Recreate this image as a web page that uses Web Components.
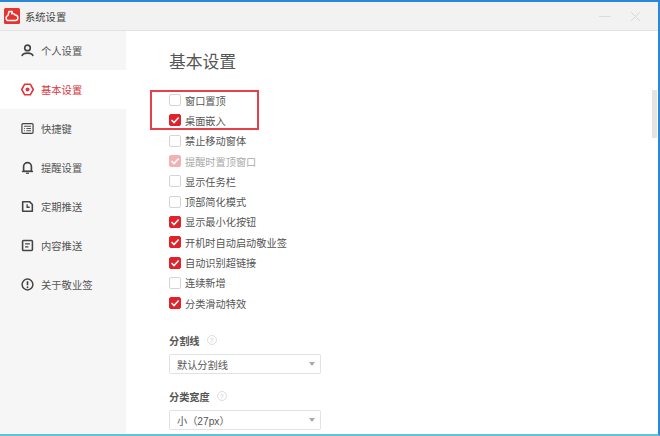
<!DOCTYPE html>
<html>
<head>
<meta charset="utf-8">
<title>系统设置</title>
<style>
    html, body { margin: 0; padding: 0; background: #fff; }
    body { font-family: "Liberation Sans", "Noto Sans CJK SC", sans-serif; }
</style>
</head>
<body>
<settings-window>
    <nav-item slot="nav" icon="user">个人设置</nav-item>
    <nav-item slot="nav" icon="hex" active>基本设置</nav-item>
    <nav-item slot="nav" icon="keys">快捷键</nav-item>
    <nav-item slot="nav" icon="bell">提醒设置</nav-item>
    <nav-item slot="nav" icon="clock">定期推送</nav-item>
    <nav-item slot="nav" icon="doc">内容推送</nav-item>
    <nav-item slot="nav" icon="info">关于敬业签</nav-item>

    <check-row>窗口置顶</check-row>
    <check-row checked>桌面嵌入</check-row>
    <check-row>禁止移动窗体</check-row>
    <check-row checked disabled>提醒时置顶窗口</check-row>
    <check-row>显示任务栏</check-row>
    <check-row>顶部简化模式</check-row>
    <check-row checked>显示最小化按钮</check-row>
    <check-row checked>开机时自动启动敬业签</check-row>
    <check-row checked>自动识别超链接</check-row>
    <check-row>连续新增</check-row>
    <check-row checked>分类滑动特效</check-row>

    <select-field slot="fields" label="分割线" value="默认分割线"></select-field>
    <select-field slot="fields" label="分类宽度" value="小（27px）"></select-field>
</settings-window>

<script>
// icon strokes for the side menu, all on a 14x14 box
const ICONS = {
    user: '<circle cx="7" cy="4.2" r="3" fill="none" stroke-width="1.8"/><path d="M1.2 13c.2-2.4 2.2-3.200 5.800-3.200s5.600.8 5.800 3.200" fill="none" stroke-width="1.700"/>',
    hex: '<path d="M4 1.300h6L13.200 7 10 12.700H4L.8 7z" fill="none" stroke-width="1.700" stroke-linejoin="round"/><circle cx="7" cy="7" r="2.100" fill="currentColor" stroke="none"/>',
    keys: '<rect x="1" y="1.800" width="12" height="10.400" rx="1.200" fill="none" stroke-width="1.300"/><path d="M3.200 4.600h7.600M5.800 7h5M5.800 9.400h5M3.200 7h1M3.200 9.400h1" fill="none" stroke-width="1"/>',
    bell: '<path d="M2.800 11V6a4.200 4.200 0 0 1 8.400 0V11z" fill="none" stroke-width="1.800"/><path d="M1 11.300h12" fill="none" stroke-width="1.500"/><path d="M5.500 13.200h3" fill="none" stroke-width="1.400"/>',
    clock: '<path d="M1.800 1.800h7.400l3 3v7.400H1.800z" fill="none" stroke-width="1.700" stroke-linejoin="round"/><path d="M6.600 4.600V7.800h2.800" fill="none" stroke-width="1.400"/>',
    doc: '<rect x="1.700" y="1.700" width="10.600" height="10.600" rx="1" fill="none" stroke-width="1.700"/><path d="M4.400 5.300h5.200M4.400 8.500h3.600" fill="none" stroke-width="1.400"/>',
    info: '<circle cx="7" cy="7" r="5.800" fill="none" stroke-width="1.600"/><path d="M7 3.500v4.300" fill="none" stroke-width="1.800"/><circle cx="7" cy="10" r="1" fill="currentColor" stroke="none"/>',
};

// (PARENT) window frame, title bar and the two columns
class SettingsWindow extends HTMLElement {
    constructor() {
        super();
        this.attachShadow({ mode: 'open' });
        this.shadowRoot.innerHTML = `
        <style>
            :host {
                display: flex;
                flex-direction: column;
                position: relative;
                box-sizing: border-box;
                width: 660px;
                height: 436px;
                overflow: hidden;
                background: #fff;
                border-top: 2px solid #2b88d8;
                border-right: 2px solid #2b88d8;
                border-bottom: 2px solid #5fc4d4;
                color: #555;
            }
            header {
                display: flex;
                align-items: center;
                flex: none;
                box-sizing: border-box;
                height: 29px;
                padding-left: 4px;
                background: #f2f2f2;
                border-bottom: 1px solid #e2e2e2;
                font-size: 10.3px;
                color: #444;
            }
            .logo { width: 16px; height: 16px; margin-right: 5px; }
            .title { flex: 1; }
            .min { display: block; margin-right: 19px; }
            .close { display: block; margin-right: 17px; }
            .body { display: flex; flex: 1; min-height: 0; }
            nav {
                display: flex;
                flex-direction: column;
                flex: none;
                width: 126px;
                background: #f6f6f6;
            }
            main {
                flex: 1;
                min-width: 0;
                padding: 21px 0 0 43px;
                background: #fff;
            }
            h1 {
                margin: 0 0 16px;
                font-size: 16.8px;
                line-height: 22px;
                font-weight: normal;
                color: #555;
            }
            .checks { display: flex; flex-direction: column; }
            .fields { margin-top: 20px; }
            .highlight {
                position: absolute;
                left: 150px;
                top: 88px;
                box-sizing: border-box;
                width: 109px;
                height: 40px;
                border: 2px solid #e8404a;
                pointer-events: none;
            }
            .scroll {
                position: absolute;
                right: 1px;
                top: 88px;
                width: 5px;
                height: 48px;
                background: #e4e4e4;
            }
        </style>
        <header>
            <svg class="logo" viewBox="0 0 16 16">
                <rect width="16" height="16" rx="1.500" fill="#e8322f"/>
                <path d="M4.500 12.500a2.500 2.500 0 0 1-.6-4.900L5 3.500h3.200L7.600 5.800a3.200 3.200 0 0 1 3.600 1.200 2.800 2.800 0 0 1 .6 5.500z" fill="none" stroke="#fff" stroke-width="1.500" stroke-linejoin="round"/>
            </svg>
            <span class="title">系统设置</span>
            <svg class="min" width="12" height="12" viewBox="0 0 12 12"><path d="M0 6.500h12" stroke="#dcdcdc" stroke-width="1"/></svg>
            <svg class="close" width="11" height="11" viewBox="0 0 11 11"><path d="M1 1l9 9M10 1l-9 9" stroke="#d8d8d8" stroke-width="1"/></svg>
        </header>
        <div class="body">
            <nav><slot name="nav"></slot></nav>
            <main>
                <h1>基本设置</h1>
                <div class="checks"><slot></slot></div>
                <div class="fields"><slot name="fields"></slot></div>
            </main>
        </div>
        <div class="highlight"></div>
        <div class="scroll"></div>
        `;
    }
}

// (CHILD 1) one entry of the side menu
class NavItem extends HTMLElement {
    constructor() {
        super();
        this.attachShadow({ mode: 'open' });
        this.shadowRoot.innerHTML = `
        <style>
            :host {
                display: flex;
                align-items: center;
                gap: 7px;
                height: 39px;
                padding-left: 21px;
                font-size: 10.3px;
                color: #555;
            }
            :host([active]) { background: #fff; color: #d9363e; }
            svg { width: 13px; height: 13px; flex: none; stroke: #444; color: #444; }
            :host([active]) svg { stroke: #e2343c; color: #e2343c; }
        </style>
        <svg viewBox="0 0 14 14"></svg>
        <slot></slot>
        `;
    }

    connectedCallback() {
        this.shadowRoot.querySelector('svg').innerHTML = ICONS[this.getAttribute('icon')] || '';
    }
}

// (CHILD 2) checkbox with its label
class CheckRow extends HTMLElement {
    constructor() {
        super();
        this.attachShadow({ mode: 'open' });
        this.shadowRoot.innerHTML = `
        <style>
            :host {
                display: flex;
                align-items: center;
                gap: 4px;
                height: 20.3px;
                font-size: 10.2px;
                color: #555;
            }
            :host([disabled]) { color: #aaa; }
            .box {
                display: flex;
                box-sizing: border-box;
                flex: none;
                width: 12px;
                height: 12px;
                border: 1px solid #d4d4d4;
                border-radius: 2px;
                background: #fff;
            }
            :host([checked]) .box { background: #e0222b; border-color: #e0222b; }
            :host([checked][disabled]) .box { background: #f2b1b4; border-color: #f2b1b4; }
            svg { display: none; width: 10px; height: 10px; }
            :host([checked]) svg { display: block; }
        </style>
        <span class="box">
            <svg viewBox="0 0 10 10"><path d="M1.500 5l2.500 2.500 4.700-5" fill="none" stroke="#fff" stroke-width="1.600"/></svg>
        </span>
        <slot></slot>
        `;
    }
}

// (CHILD 3) labelled dropdown
class SelectField extends HTMLElement {
    constructor() {
        super();
        this.attachShadow({ mode: 'open' });
        this.shadowRoot.innerHTML = `
        <style>
            :host { display: block; margin-bottom: 15px; font-size: 10.2px; color: #555; }
            .label { display: flex; align-items: center; gap: 7px; height: 14px; margin-bottom: 7px; font-weight: bold; color: #555; }
            .help {
                display: flex;
                align-items: center;
                justify-content: center;
                box-sizing: border-box;
                width: 10px;
                height: 10px;
                border: 1px solid #ddd;
                border-radius: 50%;
                font-size: 7px;
                font-weight: normal;
                color: #ccc;
            }
            .select {
                display: flex;
                align-items: center;
                justify-content: space-between;
                box-sizing: border-box;
                width: 152px;
                height: 20px;
                padding: 0 5px 0 7px;
                border: 1px solid #e2e2e2;
                border-radius: 2px;
                background: #fff;
            }
            .arrow {
                width: 0;
                height: 0;
                border-left: 3px solid transparent;
                border-right: 3px solid transparent;
                border-top: 4px solid #aaa;
            }
        </style>
        <div class="label"><span id="label"></span><span class="help">?</span></div>
        <div class="select"><span id="value"></span><span class="arrow"></span></div>
        `;
    }

    connectedCallback() {
        this.shadowRoot.querySelector('#label').textContent = this.getAttribute('label');
        this.shadowRoot.querySelector('#value').textContent = this.getAttribute('value');
    }
}

// set the element names for our components
customElements.define('settings-window', SettingsWindow);
customElements.define('nav-item', NavItem);
customElements.define('check-row', CheckRow);
customElements.define('select-field', SelectField);
</script>
</body>
</html>
